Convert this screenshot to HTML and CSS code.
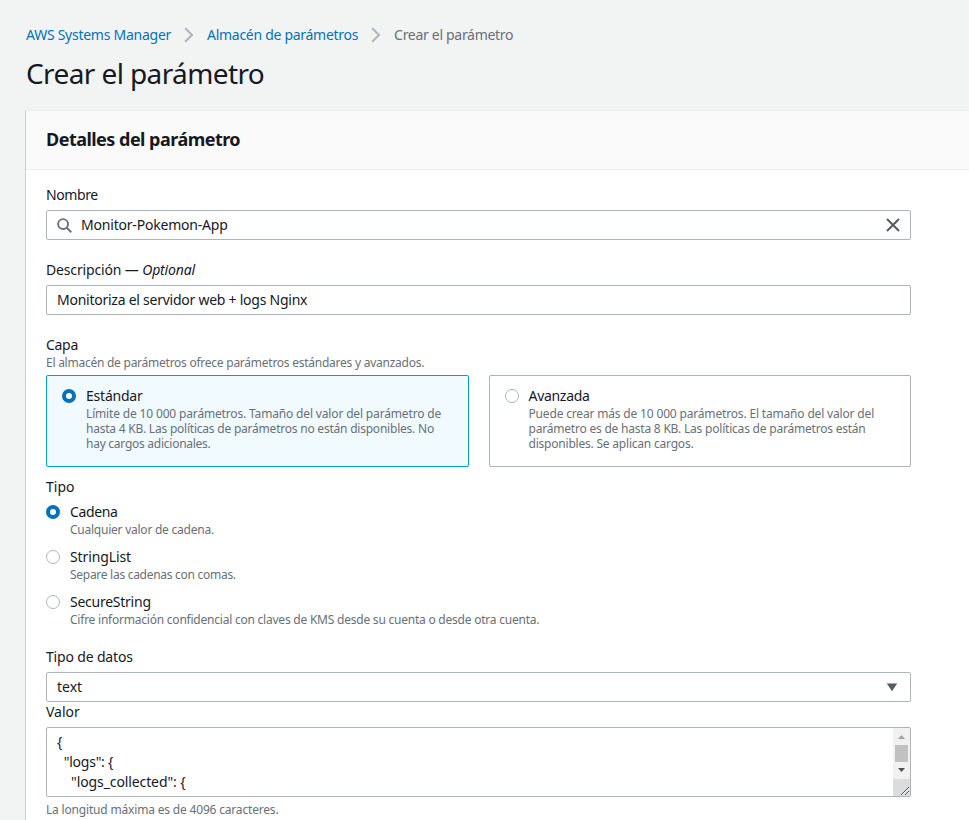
FILE: index.html
```html
<!DOCTYPE html>
<html lang="es">
<head>
<meta charset="utf-8">
<title>Crear el parámetro</title>
<link rel="stylesheet" href="styles.css">
</head>
<body>
<nav class="breadcrumbs">
  <a class="crumb crumb-root">AWS Systems Manager</a>
  <svg class="chevron" width="10" height="16" viewBox="0 0 10 16"><path d="M1.2 1.2 8 8l-6.8 6.8"/></svg>
  <a class="crumb crumb-store">Almacén de parámetros</a>
  <svg class="chevron" width="10" height="16" viewBox="0 0 10 16"><path d="M1.2 1.2 8 8l-6.8 6.8"/></svg>
  <span class="crumb crumb-current">Crear el parámetro</span>
</nav>
<h1 class="title">Crear el parámetro</h1>
<main class="panel">
  <header class="panel-header"><h2>Detalles del parámetro</h2></header>
  <form class="form">
    <section class="field">
      <div class="label"><span class="t-nombre">Nombre</span></div>
      <div class="input input-search">
        <svg class="search" width="15" height="15" viewBox="0 0 16 16"><circle cx="6.5" cy="6.5" r="5.3"/><path d="m10.3 10.3 4.9 4.9"/></svg>
        <span class="value t-monitor">Monitor-Pokemon-App</span>
        <svg class="close" width="14" height="14" viewBox="0 0 14 14"><path d="m1 1 12 12M13 1 1 13"/></svg>
      </div>
    </section>
    <section class="field">
      <div class="label"><span class="t-desc">Descripción — <em>Optional</em></span></div>
      <div class="input"><span class="value t-web">Monitoriza el servidor web + logs Nginx</span></div>
    </section>
    <section class="field field-tier">
      <div class="label"><span class="t-capa">Capa</span></div>
      <div class="help"><span class="t-capahelp">El almacén de parámetros ofrece parámetros estándares y avanzados.</span></div>
      <div class="tiles">
        <div class="tile tile-selected">
          <i class="radio radio-on"></i>
          <div>
            <div class="option"><span class="t-std">Estándar</span></div>
            <div class="help"><span class="t-s1">Límite de 10 000 parámetros. Tamaño del valor del parámetro de</span><span class="t-s2">hasta 4 KB. Las políticas de parámetros no están disponibles. No</span><span class="t-s3">hay cargos adicionales.</span></div>
          </div>
        </div>
        <div class="tile">
          <i class="radio"></i>
          <div>
            <div class="option"><span class="t-adv">Avanzada</span></div>
            <div class="help"><span class="t-a1">Puede crear más de 10 000 parámetros. El tamaño del valor del</span><span class="t-a2">parámetro es de hasta 8 KB. Las políticas de parámetros están</span><span class="t-a3">disponibles. Se aplican cargos.</span></div>
          </div>
        </div>
      </div>
    </section>
    <section class="field">
      <div class="label">Tipo</div>
      <div class="choices">
        <div class="choice"><i class="radio radio-on"></i><div><div class="option"><span class="t-cadena">Cadena</span></div><div class="help"><span class="t-c1">Cualquier valor de cadena.</span></div></div></div>
        <div class="choice"><i class="radio"></i><div><div class="option"><span class="t-list">StringList</span></div><div class="help"><span class="t-c2">Separe las cadenas con comas.</span></div></div></div>
        <div class="choice"><i class="radio"></i><div><div class="option"><span class="t-secure">SecureString</span></div><div class="help"><span class="t-c3">Cifre información confidencial con claves de KMS desde su cuenta o desde otra cuenta.</span></div></div></div>
      </div>
    </section>
    <section class="field field-datatype">
      <div class="label"><span class="t-datos">Tipo de datos</span></div>
      <div class="input input-select"><span class="value">text</span><svg class="caret" width="12" height="9" viewBox="0 0 12 9"><path d="M.8.5h10.4L6 8.3z"/></svg></div>
    </section>
    <section class="field">
      <div class="label">Valor</div>
      <div class="textarea">
        <pre class="code"><span>{</span>
<span class="t-logs">  "logs": {</span>
<span class="t-coll">    "logs_collected": {</span></pre>
        <div class="scrollbar">
          <svg width="17" height="51" viewBox="0 0 17 51"><path class="arrow-up" d="M5 11h7L8.5 7z"/><path class="thumb" d="M2 17h13v17H2z"/><path class="arrow-down" d="M5 40h7l-3.5 4z"/></svg>
          <svg class="grip" width="17" height="17" viewBox="0 0 17 17"><path class="grip-light" d="M9 16l7-7M13 16l3-3"/><path d="M8 16l8-8M12 16l4-4"/></svg>
        </div>
      </div>
      <div class="help help-value"><span class="t-max">La longitud máxima es de 4096 caracteres.</span></div>
    </section>
  </form>
</main>
</body>
</html>
```
FILE: styles.css
```css
* { box-sizing: border-box; }
html, body { height: 100%; }
body {
  margin: 0;
  display: flex;
  flex-direction: column;
  overflow: hidden;
  background: #f2f3f3;
  color: #16191f;
  font: 14px/20px "Noto Sans", sans-serif;
}
svg { display: block; flex: none; fill: none; }
span { white-space: nowrap; }
.breadcrumbs { display: flex; align-items: center; height: 20px; margin: 25px 0 0 26px; flex: none; }
.crumb { color: #0073bb; }
.crumb-root { letter-spacing: -.26px; }
.crumb-store { letter-spacing: -.29px; }
.crumb-current { color: #687078; letter-spacing: -.3px; }
.chevron { stroke: #aab7b8; stroke-width: 2; margin: 0 13px; }
.title { margin: 10px 0 0 26px; font-size: 28px; line-height: 36px; font-weight: 400; height: 36px; flex: none; letter-spacing: -.6px; }
.panel { flex: 1 0 auto; margin: 19px 0 0 25px; background: #fff; border-left: 1px solid #c8cdcd; border-top: 1px solid #eaeded; }
.panel-header { height: 59px; padding: 17px 20px; background: #fafafa; border-bottom: 1px solid #eaeded; }
h2 { margin: 0; font-size: 18px; line-height: 22px; font-weight: 700; letter-spacing: -.52px; }
.form { width: 885px; padding: 15px 0 0 20px; }
.field { margin-bottom: 20px; }
.field-tier { margin-bottom: 10px; }
.field-datatype { margin-bottom: 0; }
.label { height: 20px; margin-bottom: 5px; }
.field-tier > .label { margin-bottom: 0; }
.help { font-size: 12px; line-height: 15px; color: #687078; }
.help span { display: block; }
.input { display: flex; align-items: center; height: 30px; padding: 0 10px; border: 1px solid #aab7b8; border-radius: 2px; background: #fff; }
.value { flex: 1; }
.search { stroke: #687078; stroke-width: 2.1; margin-right: 9px; }
.close { stroke: #545b64; stroke-width: 2; }
.caret { fill: #545b64; margin-right: 2px; }
.tiles { display: grid; grid-template-columns: 1fr 1fr; gap: 20px; margin-top: 5px; }
.tile { display: flex; gap: 10px; height: 92px; padding: 10px 15px; border: 1px solid #aab7b8; border-radius: 2px; }
.tile-selected { background: #f1faff; border-color: #00a1c9; }
.radio { flex: none; width: 14px; height: 14px; margin-top: 3px; border: 1px solid #aab7b8; border-radius: 50%; background: #fff; }
.radio-on { border: 4px solid #0073bb; }
.choices { display: grid; gap: 10px; }
.choice { display: flex; gap: 10px; }
.option { height: 20px; }
.textarea { display: flex; height: 70px; border: 1px solid #aab7b8; border-radius: 2px; }
.code { flex: 1; margin: 0; padding: 4px 10px; font: inherit; }
.code span { white-space: pre; }
.scrollbar { width: 17px; background: #f1f1f1; }
.arrow-up { fill: #a3a3a3; }
.arrow-down { fill: #505050; }
.thumb { fill: #c1c1c1; }
.grip { background: #dcdcdc; stroke: #505050; stroke-width: 1; }
.grip-light { stroke: #fff; }
.help-value { margin-top: 5px; }

/* Per-string tracking */
.t-nombre { letter-spacing: -.4px; }
.t-monitor { letter-spacing: -.2px; }
.t-desc { letter-spacing: -.15px; }
.t-web { letter-spacing: -.25px; }
.t-capa { letter-spacing: -.3px; }
.t-capahelp { letter-spacing: -.25px; }
.t-s1 { letter-spacing: -.16px; }
.t-s2 { letter-spacing: -.22px; }
.t-s3 { letter-spacing: -.26px; }
.t-std { letter-spacing: -.22px; }
.t-adv { letter-spacing: -.3px; }
.t-a1 { letter-spacing: -.17px; }
.t-a2 { letter-spacing: -.21px; }
.t-a3 { letter-spacing: -.21px; }
.t-cadena { letter-spacing: -.35px; }
.t-c1 { letter-spacing: -.24px; }
.t-list { letter-spacing: -.12px; }
.t-c2 { letter-spacing: -.28px; }
.t-secure { letter-spacing: -.25px; }
.t-c3 { letter-spacing: -.225px; }
.t-datos { letter-spacing: -.17px; }
.t-logs { letter-spacing: -.25px; }
.t-coll { letter-spacing: -.11px; }
.t-max { letter-spacing: -.18px; }
```
